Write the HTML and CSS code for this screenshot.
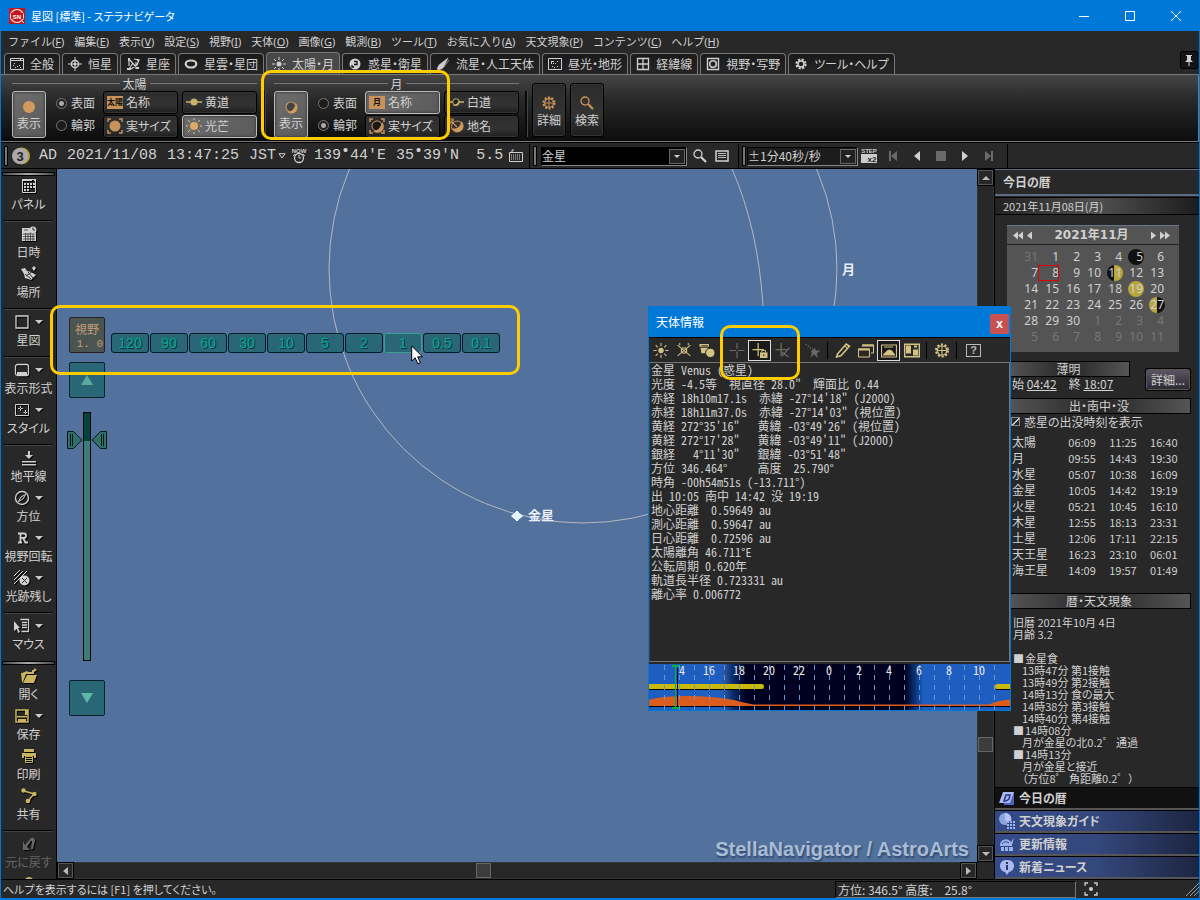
FILE: index.html
```html
<!DOCTYPE html>
<html lang="ja">
<head>
<meta charset="utf-8">
<title>星図 [標準] - ステラナビゲータ</title>
<link rel="stylesheet" href="styles.css">
</head>
<body>
<svg class="defs" aria-hidden="true">
  <defs>
    <symbol id="i-all" viewBox="0 0 14 14"><path d="M.5 1.500h13v11H.5zM1 3.500h12" fill="none" stroke="currentColor"/><path d="M10 2h1v1h-1zM3 8h1v1H3zM5 10h1v1H5zM7 9h1v1H7zM9 8h1v1H9zM10 10h1v1h-1zM4 6h1v1H4z" fill="currentColor"/></symbol>
    <symbol id="i-star" viewBox="0 0 14 14"><path d="M7 0v14M0 7h14" stroke="currentColor"/><circle cx="7" cy="7" r="3.600" fill="none" stroke="currentColor" stroke-width="1.500"/><circle cx="7" cy="7" r="1.500" fill="currentColor"/></symbol>
    <symbol id="i-const" viewBox="0 0 14 14"><path d="M3 1v8M3 2l8 9M8 2l5 1-2 5-6 4M3 12l4-6M10 5v7" fill="none" stroke="currentColor" stroke-width="1.200"/><path d="M2 1h2v3H2zM11 2h2v2h-2zM1 11h4v2H1zM10 10h3v2h-3z" fill="currentColor"/></symbol>
    <symbol id="i-neb" viewBox="0 0 14 14"><ellipse cx="7" cy="7" rx="5.300" ry="3.500" fill="none" stroke="currentColor" stroke-width="2.200"/></symbol>
    <symbol id="i-sun" viewBox="0 0 14 14"><circle cx="7" cy="7" r="2.500" fill="currentColor"/><path d="M7 0v3M7 11v3M0 7h3M11 7h3M2 2l2 2M10 10l2 2M12 2l-2 2M4 10l-2 2" stroke="currentColor"/></symbol>
    <symbol id="i-planet" viewBox="0 0 14 14"><circle cx="7" cy="7" r="5.500" fill="currentColor"/><path d="M6 4.500h3v3H6M4 8v2h2" fill="none" stroke="#111" stroke-width="1.300"/></symbol>
    <symbol id="i-comet" viewBox="0 0 14 14"><path d="M12 1L3 8l-2 4 2 1 4-2zM13 3L8 10" fill="currentColor" stroke="currentColor" stroke-width=".600"/></symbol>
    <symbol id="i-land" viewBox="0 0 14 14"><path d="M.5 1.500h13v11H.5z" fill="none" stroke="currentColor"/><path d="M3 4h3v1H4v2H3zM7 6h1v1H7zM9 4h1v1H9zM4 9h1v1H4zM9 9h1v1H9zM6 10h1v1H6zM5 6h1v1H5z" fill="currentColor"/></symbol>
    <symbol id="i-grid" viewBox="0 0 14 14"><path d="M1.500 1.500h11v11h-11zM7 1.500v11M1.500 7h11" fill="none" stroke="currentColor" stroke-width="1.300"/></symbol>
    <symbol id="i-field" viewBox="0 0 14 14"><path d="M1.500 1.500h11v11h-11z" fill="none" stroke="currentColor" stroke-width="1.400"/><circle cx="7" cy="7" r="3.300" fill="none" stroke="currentColor" stroke-width="1.600"/></symbol>
    <symbol id="i-cog" viewBox="0 0 14 14"><circle cx="7" cy="7" r="4.500" fill="none" stroke="currentColor" stroke-width="2.200" stroke-dasharray="2.200 1.334"/><circle cx="7" cy="7" r="3" fill="none" stroke="currentColor" stroke-width="1.500"/></symbol>
    <symbol id="i-gear" viewBox="0 0 14 14"><circle cx="7" cy="7" r="5.600" fill="none" stroke="currentColor" stroke-width="2" stroke-dasharray="2 1.519"/><circle cx="7" cy="7" r="4.400" fill="none" stroke="currentColor" stroke-width="1.200"/><path d="M7 3v8M3 7h8" stroke="currentColor"/></symbol>
    <symbol id="i-halfsun" viewBox="0 0 14 14"><circle cx="7" cy="7" r="5" fill="#444" stroke="#c8935a" stroke-width="1.200"/><path d="M11.500 3A6 6 0 0 1 3.500 12c4 0 8-4 8-9z" fill="#d29a5e"/></symbol>
    <symbol id="i-size" viewBox="0 0 16 16"><circle cx="8" cy="8" r="5.500" fill="currentColor"/><path d="M1 4V1h3M12 1h3v3M15 12v3h-3M4 15H1v-3" fill="none" stroke="currentColor" stroke-width="1.500"/></symbol>
    <symbol id="i-sizehalf" viewBox="0 0 16 16"><circle cx="8" cy="8" r="5" fill="#181818" stroke="currentColor"/><path d="M13 4a6 6 0 0 1-9 9c5 0 8-4 9-9z" fill="currentColor"/><path d="M1 4V1h3M12 1h3v3M15 12v3h-3M4 15H1v-3" fill="none" stroke="currentColor" stroke-width="1.500"/></symbol>
    <symbol id="i-ecl" viewBox="0 0 16 16"><path d="M0 8h16" stroke="#c9b26a" stroke-width="1.500"/><circle cx="8" cy="8" r="3.500" fill="#c9b26a"/></symbol>
    <symbol id="i-lun" viewBox="0 0 16 16"><path d="M0 8h5M11 8h5" stroke="#c9b26a" stroke-width="1.500"/><circle cx="8" cy="8" r="3.300" fill="#222" stroke="#c9b26a"/><path d="M11 6a4 4 0 0 1-6 5c3 0 5-2 6-5z" fill="#c9b26a"/></symbol>
    <symbol id="i-place" viewBox="0 0 16 16"><path d="M13 3a6 6 0 1 1-9 7c4 2 9-1 9-7z" fill="#d29a5e"/><path d="M1 1h4v2H3v2H1zM4 4l5 5" fill="none" stroke="#c8935a" stroke-width="1.200"/><circle cx="9" cy="8.500" r="5.500" fill="none" stroke="#c8935a"/></symbol>
    <symbol id="i-rays" viewBox="0 0 16 16"><circle cx="8" cy="8" r="4" fill="#e0a868"/><path d="M8 0v2M8 14v2M0 8h2M14 8h2M2 2l2 2M12 12l2 2M14 2l-2 2M4 12l-2 2" stroke="#e0c080"/></symbol>
    <symbol id="i-search" viewBox="0 0 14 14"><circle cx="5" cy="5" r="4" fill="none" stroke="currentColor" stroke-width="1.300"/><path d="M8 8l5 5" stroke="currentColor" stroke-width="2.200"/></symbol>
    <symbol id="i-pin" viewBox="0 0 10 12"><path d="M2 1h6v1H7v4l2 2H1l2-2V2H2z" fill="currentColor"/><path d="M5 8v4" stroke="currentColor"/></symbol>
    <symbol id="i-down" viewBox="0 0 8 4"><path d="M0 0h8L4 4z" fill="currentColor"/></symbol>
    <symbol id="i-left" viewBox="0 0 5 8"><path d="M5 0v8L0 4z" fill="currentColor"/></symbol>
    <symbol id="i-right" viewBox="0 0 5 8"><path d="M0 0v8l5-4z" fill="currentColor"/></symbol>
    <symbol id="i-panel" viewBox="0 0 16 16"><path d="M1.500 1.500h13v13h-13z" fill="none" stroke="currentColor"/><path d="M1 1h10v2H1zM13 1h2v2h-2zM3 5h2v2H3zM6 5h2v2H6zM9 5h2v2H9zM12 5h2v2h-2zM3 8h2v2H3zM6 8h2v2H6zM9 8h2v2H9zM12 8h2v2h-2zM3 11h2v2H3zM6 11h2v2H6z" fill="currentColor"/></symbol>
    <symbol id="i-date" viewBox="0 0 16 16"><path d="M1 2h8v5h6v8H1z" fill="currentColor"/><path d="M3 4h4M2 8h12M2 10.500h12M2 13h12M4.500 7v8M7 7v8M9.500 7v8M12 7v8" stroke="#282828" stroke-width=".700"/><circle cx="12" cy="4" r="3.500" fill="currentColor"/><path d="M12 1.500V4h2" fill="none" stroke="#282828"/></symbol>
    <symbol id="i-site" viewBox="0 0 16 16"><path d="M0 3l4-1 2 3 4 1 5 3-5 5-6-2-1-4zM13 0l2 2-2 3-2-3z" fill="currentColor"/><path d="M12 5L5 10M7 6l5 6M4 8l6 5" stroke="#282828"/></symbol>
    <symbol id="i-square" viewBox="0 0 16 16"><path d="M2 2h12v12H2z" fill="none" stroke="currentColor" stroke-width="1.300"/></symbol>
    <symbol id="i-form" viewBox="0 0 16 16"><rect x="1.500" y="2.500" width="13" height="11" rx="2" fill="none" stroke="currentColor" stroke-width="1.300"/><path d="M3 10h10v3H3z" fill="currentColor"/></symbol>
    <symbol id="i-style" viewBox="0 0 16 16"><path d="M1.500 2.500h13v11h-13z" fill="none" stroke="currentColor"/><path d="M6.500 4v2M6.500 7v2M4 6.500h2M7 6.500h2M11.500 8v2M11.500 11v1M9.500 10.500h2M12 10.500h1" stroke="currentColor"/></symbol>
    <symbol id="i-horizon" viewBox="0 0 16 16"><path d="M7 1h2v4h3L8 9 4 5h3zM1 11h14v1.500H1zM1 14h14v1.500H1z" fill="currentColor"/></symbol>
    <symbol id="i-compass" viewBox="0 0 16 16"><circle cx="8" cy="8" r="6.500" fill="none" stroke="currentColor" stroke-width="1.400"/><path d="M11.500 4.500L9 9l-4.500 2.500L7 7z" fill="none" stroke="currentColor"/></symbol>
    <symbol id="i-r" viewBox="0 0 16 16"><path d="M4 3.500h6q2 0 2 2.200t-2 2.200H6M6.500 3.500v9M4 12.500h4M9 8l2.500 4.500H14" fill="none" stroke="currentColor" stroke-width="1.800"/></symbol>
    <symbol id="i-trail" viewBox="0 0 16 16"><path d="M0 6l6-6M0 10L9 1M0 14L13 1" stroke="currentColor"/><circle cx="10.500" cy="10.500" r="5" fill="currentColor"/><path d="M8 8l5 5M13 8l-5 5" stroke="#282828"/></symbol>
    <symbol id="i-mouse" viewBox="0 0 16 16"><path d="M0 3l6 7H4l2 4-2 1-1-4-3 2z" fill="currentColor"/><path d="M6.500 1.500h8v12h-7M8 4.500h5M8 7h5M8 9.500h5" fill="none" stroke="currentColor" stroke-width="1.300"/></symbol>
    <symbol id="i-open" viewBox="0 0 16 16"><path d="M0 5h1l5-2 1 1h4V2h2V0l3 2-3 2v2H5l-3 8H1zM6 7h10l-3 8H2z" fill="currentColor"/></symbol>
    <symbol id="i-save" viewBox="0 0 16 16"><path d="M2 2h12v12H2z" fill="none" stroke="currentColor" stroke-width="1.500"/><path d="M3 8h10v1.500H3zM4 11h8v3H4zM11 2h3v5h-3z" fill="currentColor"/></symbol>
    <symbol id="i-print" viewBox="0 0 16 16"><path d="M3 1h10v3H3zM1 5h14v5h-2V8H3v2H1z" fill="currentColor"/><path d="M4.500 8.500h7v6h-7zM5 10.500h6M5 12.500h6" fill="none" stroke="currentColor"/></symbol>
    <symbol id="i-share" viewBox="0 0 16 16"><path d="M3 3l10 3-6 7" fill="none" stroke="currentColor" stroke-width="1.500"/><circle cx="2.500" cy="2.500" r="2.200" fill="currentColor"/><circle cx="13.500" cy="6" r="2.200" fill="currentColor"/><circle cx="7" cy="13" r="2.300" fill="currentColor"/></symbol>
    <symbol id="i-undo" viewBox="0 0 16 16"><path d="M2 5v9h7L6 11l4-6q1-1 1 1l-1 7h2l2-8q0-4-4-3L4 9z" fill="currentColor"/></symbol>
    <symbol id="i-bulb" viewBox="0 0 16 16"><path d="M3 4q5-6 10 0v8H3z" fill="currentColor"/></symbol>
    <symbol id="i-key" viewBox="0 0 14 14"><path d="M.5 3.500h13v9H.5zM3 3V1h2" fill="none" stroke="currentColor"/><path d="M2 6h10M2 8h10M2 10h10" stroke="currentColor" stroke-dasharray="1 1"/></symbol>
    <symbol id="i-list" viewBox="0 0 14 14"><path d="M1 2h12v10H1z" fill="none" stroke="currentColor" stroke-width="1.500"/><path d="M3 4.500h8M3 6.500h8M3 8.500h8" stroke="currentColor" stroke-width=".900"/></symbol>
    <symbol id="i-db" viewBox="0 0 16 16"><path d="M0 1h10v3H0zM1 5h8l1 6H2z" fill="currentColor"/><circle cx="11.500" cy="10.500" r="5" fill="currentColor" stroke="#282828"/><path d="M2 3h7" stroke="#282828"/></symbol>
    <symbol id="i-sunx" viewBox="0 0 14 14"><circle cx="7" cy="7" r="2.500" fill="none" stroke="currentColor"/><path d="M1 2l12 10M13 2L1 12M3 0v2M11 0v2" stroke="currentColor"/></symbol>
    <symbol id="i-plus" viewBox="0 0 16 16"><path d="M8 0v6M8 9v7M0 8h7M9 8h7" stroke="currentColor" stroke-width="1.300"/></symbol>
    <symbol id="i-lock" viewBox="0 0 16 16"><path d="M6 0v14M0 7h12" stroke="currentColor" stroke-width="1.300"/><path d="M8 10h8v6H8z" fill="currentColor"/><path d="M10 10V8h4v2" fill="none" stroke="currentColor"/><path d="M12 12v2" stroke="#222"/></symbol>
    <symbol id="i-edit" viewBox="0 0 16 16"><path d="M6 0v14M0 7h12M15 5l-8 9M7 10l7 5" stroke="currentColor" stroke-width="1.400"/></symbol>
    <symbol id="i-scope" viewBox="0 0 16 16"><path d="M0 1l8 6" stroke="currentColor" stroke-width="1.500" stroke-dasharray="1.500 1.500"/><path d="M6 9l4-4 1 3h5l-4 3 1 5-4-4-4 4 2-5z" fill="currentColor"/></symbol>
    <symbol id="i-pencil" viewBox="0 0 14 14"><path d="M2 10l8-9 3 2-8 9-4 1z" fill="none" stroke="currentColor" stroke-width="1.500"/><path d="M9 3l2 2" stroke="currentColor"/></symbol>
    <symbol id="i-wins" viewBox="0 0 16 14"><path d="M4.500 3V1.500h11v8H13M.5 5.500h11v8H.5z" fill="none" stroke="currentColor"/><path d="M4 1h12v2H4zM0 5h12v2H0z" fill="currentColor"/></symbol>
    <symbol id="i-pic" viewBox="0 0 16 14"><path d="M.5 1.500h15v12H.5z" fill="none" stroke="currentColor" stroke-width="1.200"/><path d="M2 11l4-4 2-1 3 1 3 4v1H2zM3 3h9v1H3z" fill="currentColor"/></symbol>
    <symbol id="i-book" viewBox="0 0 16 14"><path d="M.7.700h14.600v12.600H.7z" fill="none" stroke="currentColor" stroke-width="1.400"/><path d="M2 2h5v8H2zM9 6h5v6H9zM10 2h3v2h-3z" fill="currentColor"/></symbol>
    <symbol id="i-focus" viewBox="0 0 14 14"><path d="M1 4V1h3M10 1h3v3M13 10v3h-3M4 13H1v-3" fill="none" stroke="currentColor" stroke-width="1.300"/><circle cx="7" cy="7" r="2" fill="currentColor"/></symbol>
  </defs>
</svg>
<div class="window">
  <header class="titlebar">
    <svg class="logo" viewBox="0 0 16 16"><rect width="16" height="16" fill="#c81418"/><circle cx="8" cy="8" r="6.500" fill="none" stroke="#fff" stroke-width="1.200"/><rect x="2" y="5" width="12" height="6" fill="#c81418"/><text x="8" y="10.500" text-anchor="middle" class="logo-text">SN</text><path d="M12 12l3 3" stroke="#fff"/></svg>
    <h1>星図 [標準] - ステラナビゲータ</h1>
    <div class="wincontrols">
      <button aria-label="最小化"><svg width="10" height="10"><path d="M0 5.500h10" stroke="#fff"/></svg></button>
      <button aria-label="最大化"><svg width="10" height="10"><path d="M.5.500h9v9h-9z" fill="none" stroke="#fff"/></svg></button>
      <button aria-label="閉じる"><svg width="10" height="10"><path d="M0 0l10 10M10 0L0 10" stroke="#fff"/></svg></button>
    </div>
  </header>
  <nav class="menubar">
    <a href="#">ファイル(<u>F</u>)</a><a href="#">編集(<u>E</u>)</a><a href="#">表示(<u>V</u>)</a><a href="#">設定(<u>S</u>)</a><a href="#">視野(<u>I</u>)</a><a href="#">天体(<u>O</u>)</a><a href="#">画像(<u>G</u>)</a><a href="#">観測(<u>B</u>)</a><a href="#">ツール(<u>T</u>)</a><a href="#">お気に入り(<u>A</u>)</a><a href="#">天文現象(<u>P</u>)</a><a href="#">コンテンツ(<u>C</u>)</a><a href="#">ヘルプ(<u>H</u>)</a>
  </nav>
  <div class="tabs">
    <button><svg><use href="#i-all"/></svg>全般</button>
    <button><svg><use href="#i-star"/></svg>恒星</button>
    <button><svg><use href="#i-const"/></svg>星座</button>
    <button><svg><use href="#i-neb"/></svg>星雲・星団</button>
    <button class="active"><svg><use href="#i-sun"/></svg>太陽・月</button>
    <button><svg><use href="#i-planet"/></svg>惑星・衛星</button>
    <button><svg><use href="#i-comet"/></svg>流星・人工天体</button>
    <button><svg><use href="#i-land"/></svg>昼光・地形</button>
    <button><svg><use href="#i-grid"/></svg>経緯線</button>
    <button><svg><use href="#i-field"/></svg>視野・写野</button>
    <button><svg><use href="#i-cog"/></svg>ツール・ヘルプ</button>
    <button class="pin" aria-label="固定"><svg><use href="#i-pin"/></svg></button>
  </div>
  <section class="ribbon">
    <fieldset class="group">
      <legend>太陽</legend>
      <button class="big on"><svg viewBox="0 0 14 14"><circle cx="7" cy="7" r="6" fill="#d29a5e"/></svg>表示</button>
      <div class="radios">
        <label><input type="radio" name="sun" checked>表面</label>
        <label><input type="radio" name="sun">輪郭</label>
      </div>
      <div class="cmds">
        <button><span class="tag">太陽</span>名称</button>
        <button><svg><use href="#i-ecl"/></svg>黄道</button>
        <button><svg class="gold"><use href="#i-size"/></svg>実サイズ</button>
        <button class="on"><svg><use href="#i-rays"/></svg>光芒</button>
      </div>
    </fieldset>
    <fieldset class="group">
      <legend>月</legend>
      <button class="big on"><svg><use href="#i-halfsun"/></svg>表示</button>
      <div class="radios">
        <label><input type="radio" name="moon">表面</label>
        <label><input type="radio" name="moon" checked>輪郭</label>
      </div>
      <div class="cmds">
        <button class="on"><span class="tag">月</span>名称</button>
        <button><svg><use href="#i-lun"/></svg>白道</button>
        <button><svg class="gold"><use href="#i-sizehalf"/></svg>実サイズ</button>
        <button><svg><use href="#i-place"/></svg>地名</button>
      </div>
    </fieldset>
    <div class="actions">
      <button class="big"><svg class="gold"><use href="#i-gear"/></svg>詳細</button>
      <button class="big"><svg class="gold"><use href="#i-search"/></svg>検索</button>
    </div>
  </section>
  <div class="toolbar">
    <div class="band clock">
      <i class="grip"></i>
      <svg class="badge" viewBox="0 0 18 18"><circle cx="9.500" cy="9" r="8.500" fill="#b9a23c"/><circle cx="8" cy="9" r="8" fill="#aaa"/><text x="8" y="13.500" text-anchor="middle" class="badge-text">3</text></svg>
      <span>AD</span><span>2021/11/08</span><span>13:47:25</span><span>JST</span>
      <svg class="tri" viewBox="0 0 8 6"><path d="M1 .7h6L4 5z" fill="none" stroke="#d0d0d0"/></svg>
      <svg class="now" viewBox="0 0 16 16"><text x="8" y="5" text-anchor="middle" class="tiny">NOW</text><circle cx="8" cy="10" r="4.500" fill="none" stroke="#ccc" stroke-width="1.300"/><path d="M8 7v3h2M4 6L2 8M12 6l2 2" fill="none" stroke="#ccc"/></svg>
      <span class="c-lon">139<sup>•</sup>44'E</span><span class="c-lat">35<sup>•</sup>39'N</span><span>5.5</span>
      <svg class="key"><use href="#i-key"/></svg>
    </div>
    <div class="band">
      <i class="grip"></i>
      <div class="combo target"><select aria-label="天体"><option>金星</option></select><svg><use href="#i-down"/></svg></div>
      <button aria-label="検索"><svg><use href="#i-search"/></svg></button>
      <button aria-label="一覧"><svg><use href="#i-list"/></svg></button>
    </div>
    <div class="band play">
      <i class="grip"></i>
      <div class="combo rate"><select aria-label="速度"><option>±1分40秒/秒</option></select><svg><use href="#i-down"/></svg></div>
      <button aria-label="ステップ"><svg class="step" viewBox="0 0 16 16"><text x="8" y="5" text-anchor="middle" class="tiny">STEP</text><path d="M0 6h16v9H0z" fill="#ccc"/><text x="11" y="14" text-anchor="middle" class="tiny dark">x2</text></svg></button>
      <button class="dim" aria-label="先頭"><svg viewBox="0 0 12 12"><path d="M2 1h2v10H2zM10 1v10L4 6z" fill="currentColor"/></svg></button>
      <button aria-label="逆再生"><svg viewBox="0 0 12 12"><path d="M9 1v10L3 6z" fill="currentColor"/></svg></button>
      <button class="dim" aria-label="停止"><svg viewBox="0 0 12 12"><path d="M1 1h10v10H1z" fill="currentColor"/></svg></button>
      <button aria-label="再生"><svg viewBox="0 0 12 12"><path d="M3 1v10l6-5z" fill="currentColor"/></svg></button>
      <button class="dim" aria-label="末尾"><svg viewBox="0 0 12 12"><path d="M8 1h2v10H8zM2 1v10l6-5z" fill="currentColor"/></svg></button>
    </div>
  </div>
  <main class="workspace">
    <aside class="tools">
      <i class="hgrip top"></i>
      <button><span><svg><use href="#i-panel"/></svg></span>パネル</button>
      <hr>
      <button><span><svg><use href="#i-date"/></svg></span>日時</button>
      <button><span><svg><use href="#i-site"/></svg></span>場所</button>
      <hr>
      <button class="drop"><span><svg><use href="#i-square"/></svg></span>星図</button>
      <hr>
      <button class="drop"><span><svg><use href="#i-form"/></svg></span>表示形式</button>
      <button class="drop"><span><svg><use href="#i-style"/></svg></span>スタイル</button>
      <hr>
      <button><span><svg><use href="#i-horizon"/></svg></span>地平線</button>
      <button class="drop"><span><svg><use href="#i-compass"/></svg></span>方位</button>
      <button class="drop"><span><svg><use href="#i-r"/></svg></span>視野回転</button>
      <button class="drop"><span><svg><use href="#i-trail"/></svg></span>光跡残し</button>
      <hr>
      <button class="drop"><span><svg><use href="#i-mouse"/></svg></span>マウス</button>
      <i class="hgrip"></i>
      <button class="file"><span><svg><use href="#i-open"/></svg></span>開く</button>
      <button class="file drop"><span><svg><use href="#i-save"/></svg></span>保存</button>
      <button class="file"><span><svg><use href="#i-print"/></svg></span>印刷</button>
      <button class="file"><span><svg><use href="#i-share"/></svg></span>共有</button>
      <hr>
      <button class="off" disabled><span><svg><use href="#i-undo"/></svg></span>元に戻す</button>
      <button class="file" aria-label="ヒント"><span><svg><use href="#i-bulb"/></svg></span></button>
    </aside>
    <section class="chart">
      <div class="sky">
        <svg class="orbits" width="920" height="693" viewBox="57 169 920 693">
          <circle cx="583" cy="269" r="254"/>
          <path d="M732 169Q758 228 763 306"/>
          <path d="M517 511l2.500 2.500 3 2.500-3 2.500-2.500 2.500-2.500-2.500-3-2.500 3-2.500z" class="venus"/>
        </svg>
        <span class="mark moon">月</span>
        <span class="mark venusname">金星</span>
        <div class="zoom">
          <button class="fov">視野<b>1. 0</b></button>
          <button class="arrow" aria-label="広げる"><svg viewBox="0 0 14 12"><path d="M7 1l6 10H1z" fill="#5aa89c"/></svg></button>
          <input type="range" min="0" max="100" value="8" aria-label="視野">
          <button class="arrow" aria-label="狭める"><svg viewBox="0 0 14 12"><path d="M1 1h12L7 11z" fill="#5fb5a6"/></svg></button>
        </div>
        <div class="fovs"><button>120</button><button>90</button><button>60</button><button>30</button><button>10</button><button>5</button><button>2</button><button class="hot">1</button><button>0.5</button><button>0.1</button></div>
        <svg class="cursor" viewBox="0 0 12 20"><path d="M.7 1v15l3.500-3.200 2.600 6 2.500-1.100-2.600-5.900H11.500z" fill="#fff" stroke="#000"/></svg>
        <strong class="brand">StellaNavigator / AstroArts</strong>
      </div>
      <div class="vscroll"><button aria-label="上"><svg class="v"><use href="#i-down"/></svg></button><i></i><button aria-label="下"><svg><use href="#i-down"/></svg></button></div>
      <div class="hscroll"><button aria-label="左"><svg><use href="#i-left"/></svg></button><i></i><button aria-label="右"><svg><use href="#i-right"/></svg></button></div>
    </section>
    <aside class="side">
      <h2>今日の暦</h2>
      <div class="today">2021年11月08日(月)</div>
      <div class="almanac">
        <div class="cal">
          <div class="calhead"><button aria-label="前年"><svg><use href="#i-left"/></svg><svg><use href="#i-left"/></svg></button><button aria-label="前月"><svg><use href="#i-left"/></svg></button><strong>2021年11月</strong><button aria-label="翌月"><svg><use href="#i-right"/></svg></button><button aria-label="翌年"><svg><use href="#i-right"/></svg><svg><use href="#i-right"/></svg></button></div>
          <table>
            <tr><td class="out">31</td><td>1</td><td>2</td><td>3</td><td>4</td><td><span class="new">5</span></td><td>6</td></tr>
            <tr><td>7</td><td class="sel">8</td><td>9</td><td>10</td><td><span class="first">11</span></td><td>12</td><td>13</td></tr>
            <tr><td>14</td><td>15</td><td>16</td><td>17</td><td>18</td><td><span class="full">19</span></td><td>20</td></tr>
            <tr><td>21</td><td>22</td><td>23</td><td>24</td><td>25</td><td>26</td><td><span class="last">27</span></td></tr>
            <tr><td>28</td><td>29</td><td>30</td><td class="out">1</td><td class="out">2</td><td class="out">3</td><td class="out">4</td></tr>
            <tr class="out"><td>5</td><td>6</td><td>7</td><td>8</td><td>9</td><td>10</td><td>11</td></tr>
          </table>
        </div>
        <div class="twilight">
          <div><h3>薄明</h3><p>始 <u>04:42</u>　終 <u>18:07</u></p></div>
          <button>詳細...</button>
        </div>
        <h3>出・南中・没</h3>
        <label class="check"><input type="checkbox" checked>惑星の出没時刻を表示</label>
        <table class="rise">
          <tr><th>太陽</th><td>06:09</td><td>11:25</td><td>16:40</td></tr>
          <tr><th>月</th><td>09:55</td><td>14:43</td><td>19:30</td></tr>
          <tr><th>水星</th><td>05:07</td><td>10:38</td><td>16:09</td></tr>
          <tr><th>金星</th><td>10:05</td><td>14:42</td><td>19:19</td></tr>
          <tr><th>火星</th><td>05:21</td><td>10:45</td><td>16:10</td></tr>
          <tr><th>木星</th><td>12:55</td><td>18:13</td><td>23:31</td></tr>
          <tr><th>土星</th><td>12:06</td><td>17:11</td><td>22:15</td></tr>
          <tr><th>天王星</th><td>16:23</td><td>23:10</td><td>06:01</td></tr>
          <tr><th>海王星</th><td>14:09</td><td>19:57</td><td>01:49</td></tr>
        </table>
        <h3>暦・天文現象</h3>
        <div class="events">
          <p>旧暦 2021年10月 4日</p><p>月齢 3.2</p>
          <h4>金星食</h4>
          <ul><li>13時47分 第1接触</li><li>13時49分 第2接触</li><li>14時13分 食の最大</li><li>14時38分 第3接触</li><li>14時40分 第4接触</li></ul>
          <h4>14時08分</h4>
          <ul><li>月が金星の北0.2゜ 通過</li></ul>
          <h4>14時13分</h4>
          <ul><li>月が金星と接近</li><li>（方位8゜ 角距離0.2゜）</li></ul>
        </div>
      </div>
      <nav class="links">
        <a href="#" class="current"><svg viewBox="0 0 16 16"><path d="M5 3h10v12H5z" fill="#4a62b8"/><path d="M4 2h11l-4 11H0z" fill="#a9b9ee"/><path d="M7 5h4l-1 4-3 2H5z" fill="none" stroke="#26348a" stroke-width="1.500"/></svg>今日の暦</a>
        <a href="#"><svg viewBox="0 0 16 16"><circle cx="6" cy="6" r="6" fill="#8da5df"/><path d="M6 0v8h6a6 6 0 0 0-6-8z" fill="#b5c5f2"/><path d="M8 8h8v8H8z" fill="#9db1ea"/><path d="M8 10.500h8M8 13.500h8M10.500 8v8M13.500 8v8" stroke="#34498c"/></svg>天文現象ガイド</a>
        <a href="#"><svg viewBox="0 0 16 16"><path d="M1 9a6 6 0 0 1 11-3l3-4-2 7v1H1zM2 11h3v4H2zM6 11h3v4H6zM10 11h4v4h-4z" fill="#9db1ea"/><path d="M3 8q3-4 7-1" fill="none" stroke="#34498c"/></svg>更新情報</a>
        <a href="#"><svg viewBox="0 0 16 16"><path d="M8 1a6 6 0 0 1 2 12l-2 3-2-3A6 6 0 0 1 8 1z" fill="#a9b9ee"/><path d="M7 3h2v2H7zM7 6h2v5H7z" fill="#26386e"/></svg>新着ニュース</a>
      </nav>
    </aside>
  </main>
  <footer class="status"><span>ヘルプを表示するには [F1] を押してください。</span><output>方位: 346.5° 高度:　25.8°</output><svg class="focus"><use href="#i-focus"/></svg><svg class="sizer" viewBox="0 0 14 14"><path d="M1 14L14 1M5 14l9-9M9 14l5-5" stroke="#999"/></svg></footer>

  <section class="dialog" aria-label="天体情報">
    <header><h2>天体情報</h2><button aria-label="閉じる">x</button></header>
    <div class="dtools">
      <button aria-label="太陽"><svg><use href="#i-sun"/></svg></button><button aria-label="太陽を消す"><svg><use href="#i-sunx"/></svg></button><button aria-label="データ"><svg><use href="#i-db"/></svg></button><i></i>
      <button class="dim" aria-label="中央"><svg><use href="#i-plus"/></svg></button><button class="set" aria-label="固定"><svg><use href="#i-lock"/></svg></button><button class="dim" aria-label="編集"><svg><use href="#i-edit"/></svg></button><i></i>
      <button class="dim" aria-label="望遠鏡"><svg><use href="#i-scope"/></svg></button><i></i>
      <button aria-label="メモ"><svg><use href="#i-pencil"/></svg></button><button aria-label="ウィンドウ"><svg><use href="#i-wins"/></svg></button><button class="set" aria-label="高度グラフ"><svg><use href="#i-pic"/></svg></button><button aria-label="資料"><svg><use href="#i-book"/></svg></button><i></i>
      <button aria-label="設定"><svg><use href="#i-gear"/></svg></button><i></i><button class="help">?</button>
    </div>
    <pre>金星 Venus (惑星)
光度 -4.5等  視直径 28.0"  輝面比 0.44
赤経 18h10m17.1s  赤緯 -27°14'18" (J2000)
赤経 18h11m37.0s  赤緯 -27°14'03" (視位置)
黄経 272°35'16"   黄緯 -03°49'26" (視位置)
黄経 272°17'28"   黄緯 -03°49'11" (J2000)
銀経   4°11'30"   銀緯 -03°51'48"
方位 346.464°     高度  25.790°
時角 -00h54m51s (-13.711°)
出 10:05 南中 14:42 没 19:19
地心距離  0.59649 au
測心距離  0.59647 au
日心距離  0.72596 au
太陽離角 46.711°E
公転周期 0.620年
軌道長半径 0.723331 au
離心率 0.006772</pre>
    <svg class="timeline" viewBox="0 0 361 46">
      <defs><linearGradient id="night"><stop offset="0" stop-color="#1e5ec0"/><stop offset=".2" stop-color="#1e5ec0"/><stop offset=".21" stop-color="#2b559c"/><stop offset=".23" stop-color="#0a3070"/><stop offset=".27" stop-color="#000020"/><stop offset=".71" stop-color="#000020"/><stop offset=".74" stop-color="#0a3a80"/><stop offset=".76" stop-color="#1e5ec0"/><stop offset="1" stop-color="#1e5ec0"/></linearGradient></defs>
      <rect width="361" height="46" fill="url(#night)"/>
      <path d="M0 42.500h361M0 25.500h114M347 25.500h14" stroke="#000"/>
      <path d="M0 36q12-4 40-4 22 0 45 4 12 3 20 4.500h235q8-4 21-5V42H0z" fill="#dc5c1e"/>
      <path d="M0 20h113q2 0 2 2.500t-2 2.500H0zM361 20h-13q-2 0-2 2.500t2 2.500h13z" fill="#c8b90a"/>
      <path class="hours" d="M15.500 1v45M30.500 1v45M45.500 1v45M60.500 1v45M75.500 1v45M90.500 1v45M105.500 1v45M120.500 1v45M135.500 1v45M150.500 1v45M165.500 1v45M180.500 1v45M195.500 1v45M210.500 1v45M225.500 1v45M240.500 1v45M255.500 1v45M270.500 1v45M285.500 1v45M300.500 1v45M315.500 1v45M330.500 1v45M345.500 1v45"/>
      <g class="hourtext"><text x="33" y="11">4</text><text x="60" y="11">16</text><text x="90" y="11">18</text><text x="120" y="11">20</text><text x="150" y="11">22</text><text x="180" y="11">0</text><text x="210" y="11">2</text><text x="240" y="11">4</text><text x="270" y="11">6</text><text x="300" y="11">8</text><text x="330" y="11">10</text></g>
      <path d="M28.500 4v39" stroke="#001020"/><path d="M23 1h7v2h-3v40h3v2h-7v-2h3V3h-3z" fill="#00b43c"/>
    </svg>
  </section>
  <i class="callout c1"></i><i class="callout c2"></i><i class="callout c3"></i>
</div>
</body>
</html>
```

FILE: styles.css
```css
* { box-sizing: border-box; }
:root { --text: #d0d0d0; --khaki: #d2c284; --panel: #282828; }
body { margin: 0; background: #0078d7; color: var(--text); font: 12px/16px "Noto Sans CJK JP", sans-serif; font-feature-settings: "palt"; }
button, select, input { font: inherit; color: inherit; font-feature-settings: inherit; margin: 0; }
button { padding: 0; border: 0; background: none; display: inline-flex; align-items: center; justify-content: center; white-space: nowrap; }
h1, h2, h3, h4, p, ul { margin: 0; padding: 0; font-weight: 400; font-size: inherit; }
ul { list-style: none; }
a { color: inherit; text-decoration: none; }
svg { display: block; flex: none; width: 14px; height: 14px; }
svg.defs { position: absolute; width: 0; height: 0; }
.window { position: relative; display: flex; flex-direction: column; height: 100vh; padding: 0 1px 2px 1px; overflow: hidden; }

.titlebar { display: flex; align-items: center; height: 31px; flex: none; padding-left: 8px; background: #0078d7; color: #fff; }
.titlebar .logo { width: 16px; height: 16px; }
.logo-text { font: bold 6px "Liberation Sans", sans-serif; fill: #fff; }
.titlebar h1 { margin-left: 6px; flex: 1; font-size: 11px; }
.wincontrols { display: flex; height: 100%; }
.wincontrols button { width: 46px; }
.wincontrols svg { width: 10px; height: 10px; }

.menubar { display: flex; gap: 10px; align-items: center; height: 21px; flex: none; padding-left: 7px; background: var(--panel); font: 11px/16px "Noto Sans", "Noto Sans CJK JP", sans-serif; }
.menubar a { white-space: nowrap; }
.tabs { display: flex; gap: 2px; align-items: flex-end; height: 22px; flex: none; padding: 0 1px 0 3px; background: var(--panel); }
.tabs button { height: 21px; gap: 6px; padding: 0 5px; border: 1px solid #777; border-bottom: 0; border-radius: 4px 4px 0 0; background: linear-gradient(#1a1a1a, #262626); }
.tabs .active { height: 22px; background: #484848; }
.tabs .pin { margin-left: auto; padding: 0; width: 18px; height: 18px; margin-bottom: 5px; border: 1px solid #000; border-radius: 2px; background: #151515; }
.pin svg { width: 10px; height: 12px; }

.ribbon { display: flex; height: 68px; flex: none; padding: 0 11px; border: 1px solid #777; border-left: 0; background: linear-gradient(#454545, #2a2a2a 35%, #0c0c0c); }
.group { display: flex; align-items: center; margin: 0 17px 0 0; padding: 15px 0 3px; border: 0; position: relative; min-width: 0; }
.group + .group { margin-right: 13px; }
.group legend { position: absolute; left: 0; right: 0; top: 1px; display: flex; align-items: center; gap: 3px; padding: 0; line-height: 15px; }
.group legend::before, .group legend::after { content: ""; flex: 1; height: 1px; background: #777; }
.group::after { content: ""; position: absolute; right: -9px; top: 16px; bottom: 4px; width: 2px; background: #0a0a0a; border-right: 1px solid #444; }
.ribbon button { border: 1px solid #000; border-radius: 3px; background: linear-gradient(#2c2c2c, #333 60%, #1e1e1e); box-shadow: inset 0 0 0 1px #333; }
.ribbon button.on { border-color: #bbb; background: linear-gradient(135deg, #6e6e6e, #595959); box-shadow: inset 0 0 2px 1px #444; }
.ribbon .big { flex-direction: column; width: 34px; height: 47px; gap: 1px; padding-top: 2px; margin-right: 10px; }
.ribbon .actions { display: flex; gap: 4px; align-items: center; padding-top: 4px; }
.ribbon .actions .big { height: 54px; margin: 0; gap: 2px; padding-top: 3px; }
.gold { color: #c8935a; }
.radios { display: grid; gap: 6px; width: 47px; }
.radios label { display: flex; align-items: center; gap: 4px; }
.radios input { appearance: none; width: 11px; height: 11px; border: 1px solid #777; border-radius: 50%; background: #1c1c1c; }
.radios input:checked { background: radial-gradient(#aaa 2px, #222 3px); }
.cmds { display: grid; grid-template-columns: 75px 75px; gap: 1px 4px; }
.cmds button { height: 23px; justify-content: flex-start; padding-left: 3px; gap: 3px; }
.cmds svg { width: 16px; height: 16px; }
.tag { width: 16px; height: 13px; line-height: 12px; font-size: 8px; font-weight: 700; background: #c8935a; color: #111; text-align: center; }

.toolbar { display: flex; height: 26px; flex: none; padding: 1px 0; border-top: 1px solid #000; background: var(--panel); }
.band { display: flex; align-items: center; padding: 0 2px 0 3px; border-right: 1px solid #000; height: 24px; }
.grip { flex: none; width: 4px; height: 20px; margin-right: 4px; border: 1px solid #000; background: #777; }
.clock { font: 15px/18px "Liberation Mono", monospace; font-feature-settings: normal; white-space: pre; width: 529px; }
.clock span { margin-right: 10px; }
.badge { width: 18px; height: 18px; margin-right: 9px; }
.badge-text { font: bold 13px "Liberation Sans", sans-serif; fill: #222; }
.clock .tri { width: 8px; height: 6px; margin: 0 5px 0 -8px; }
.clock .now { width: 16px; height: 16px; margin-right: 7px; }
.tiny { font: bold 6px "Liberation Sans", sans-serif; fill: #ccc; }
.tiny.dark { fill: #222; font-size: 8px; }
.clock sup { display: inline-block; width: 9px; font-size: 15px; line-height: 8px; vertical-align: 4px; }
.clock .c-lat { margin-right: 17px; }
.clock .key { margin-left: -4px; }
.combo { display: flex; height: 19px; border: 1px solid #888; border-top-color: #000; border-left-color: #000; background: #000; }
.combo select { flex: 1; min-width: 0; padding: 0; border: 0; background: none; appearance: none; outline: 0; font-feature-settings: normal; }
.combo svg { width: 16px; height: 15px; margin: 1px; padding: 5px 4px; border: 1px solid #666; background: #222; }
.target { width: 146px; margin-right: 5px; }
.rate { width: 111px; margin: 0 3px 0 -3px; background: #1c1c1c; }
.band button { width: 16px; margin-right: 6px; }
.play button { margin-right: 8px; }
.play button svg { width: 12px; height: 12px; }
.play button .step { width: 16px; height: 16px; }
.dim { color: #6a6a6a; }

.workspace { display: flex; flex: 1; min-height: 0; background: var(--panel); border-top: 1px solid #000; }
.tools { width: 56px; flex: none; display: flex; flex-direction: column; overflow: hidden; border-right: 1px solid #000; }
.tools button { flex: none; flex-direction: column; justify-content: flex-start; height: 40px; line-height: 18px; }
.tools button span { display: flex; align-items: center; gap: 5px; height: 16px; margin-bottom: 1px; filter: drop-shadow(1px 1px 0 #000); }
.tools svg { width: 16px; height: 16px; }
.tools .drop span::after { content: ""; border: 4px solid transparent; border-top-color: #ccc; border-bottom: 0; }
.tools .file span { color: #c9b560; }
.tools .off { color: #666; }
.tools hr { flex: none; width: 50px; height: 2px; margin: 2px 2px 4px; border: 0; background: #000; border-bottom: 1px solid #444; }
.hgrip { flex: none; height: 4px; margin: 3px 1px; border: 1px solid #000; background: linear-gradient(90deg, #444, #aaa, #444); }
.hgrip.top { margin-bottom: 2px; }

.chart { flex: 1; min-width: 0; display: grid; grid-template: 1fr 17px / 1fr 17px; }
.sky { position: relative; overflow: hidden; background: #52719d; }
.orbits { position: absolute; left: 0; top: 0; width: 920px; height: 693px; fill: none; stroke: #b4b8c2; }
.orbits .venus { fill: #e0f4ff; stroke: #fff; }
.mark { position: absolute; color: #eceff7; font-weight: 700; font-size: 13px; }
.moon { left: 785px; top: 92px; }
.venusname { left: 471px; top: 338px; }
.zoom { position: absolute; left: 10px; top: 148px; width: 40px; display: flex; flex-direction: column; align-items: center; }
.fov { width: 36px; height: 36px; flex-direction: column; align-items: stretch; padding: 1px; border: 1px solid #2b2020; border-radius: 2px; background: #4a5550; color: #c09a78; line-height: 17px; }
.fov b { font: 11px/14px "Liberation Mono", monospace; text-align: right; }
.arrow { width: 36px; height: 36px; border: 1px solid #06222a; border-radius: 2px; background: #296676; margin: 9px 0 14px; }
.arrow svg { width: 14px; height: 12px; }
.zoom input { appearance: none; writing-mode: vertical-lr; width: 40px; height: 249px; background: none; margin-bottom: 10px; }
.zoom input::-webkit-slider-runnable-track { width: 8px; height: 249px; border: 1px solid #000; background: linear-gradient(#04443c 28px, #3c7e78 28px); }
.zoom input::-webkit-slider-thumb { appearance: none; width: 40px; height: 18px; margin-left: -17px; background: url("data:image/svg+xml,%3Csvg xmlns='http://www.w3.org/2000/svg' width='40' height='18'%3E%3Cpath d='M.5.500h6L15 9l-8.500 8.500h-6zM39.500.500h-6L25 9l8.500 8.500h6z' fill='%23307068' stroke='%23001818'/%3E%3Cpath d='M3.500 3v12M5.500 3v12M34.500 3v12M36.500 3v12' stroke='%23001818'/%3E%3C/svg%3E"); }
.fovs { position: absolute; left: 54px; top: 164px; display: flex; gap: 1px; }
.fovs button { width: 38px; height: 20px; border: 1px solid #001c28; border-radius: 3px; background: #296676; color: #00a890; font: 14px/18px "Liberation Sans", sans-serif; text-shadow: 1px 1px 0 #10343e; }
.fovs .hot { border-color: #38a090; }
.cursor { position: absolute; left: 354px; top: 176px; width: 12px; height: 20px; }
.brand { position: absolute; right: 8px; bottom: 1px; font: bold 20px/24px "Liberation Sans", sans-serif; color: #a9bcd6; text-shadow: 1px 2px 2px #30486a; }
.vscroll, .hscroll { display: flex; justify-content: space-between; position: relative; background: #272727; border: 1px solid #333; }
.vscroll { flex-direction: column; }
.vscroll button, .hscroll button { width: 15px; height: 15px; border: 1px solid #555; outline: 1px solid #000; color: #bbb; }
.vscroll svg { width: 8px; height: 4px; }
.vscroll .v { transform: rotate(180deg); }
.hscroll svg { width: 5px; height: 8px; }
.vscroll i, .hscroll i { width: 15px; height: 15px; background: #3c3c3c; border: 1px solid #666; position: absolute; }
.vscroll i { top: 82%; }
.hscroll i { left: 418px; }

.side { width: 205px; flex: none; display: flex; flex-direction: column; border-left: 1px solid #000; }
.side h2 { font-weight: 700; line-height: 24px; padding-left: 8px; border-top: 1px solid #5c6a86; border-bottom: 2px solid #5c6a86; }
.today { margin-top: 1px; padding-left: 8px; font-size: 11px; line-height: 16px; border: solid #000; border-width: 1px 0; background: linear-gradient(90deg, #222, #505050 50%, #1c1c1c); }
.almanac { flex: 1; padding: 10px 8px 0 12px; min-height: 0; }
.cal { width: 172px; height: 127px; background: #545454; border-top: 1px solid #68768c; font: 12px/16px "Noto Sans", "DejaVu Sans", sans-serif; }
.calhead { display: flex; align-items: center; height: 19px; padding: 0 7px 0 4px; border-bottom: 1px solid #222; }
.calhead strong { flex: 1; text-align: center; font: bold 12px/16px "DejaVu Sans", "Noto Sans CJK JP", sans-serif; font-feature-settings: normal; white-space: nowrap; }
.calhead svg { width: 5px; height: 9px; }
.calhead button { margin: 0 2px; }
.cal table { border-collapse: collapse; margin: 4px 0 0 10px; table-layout: fixed; width: 147px; }
.cal td { width: 21px; height: 16px; padding: 0; text-align: right; line-height: 16px; }
.cal td.sel { outline: 1px solid #d00; outline-offset: -1px; }
.cal .out { color: #777; }
.cal td span { display: inline-block; width: 16px; height: 16px; border-radius: 50%; text-align: right; margin-right: -1px; padding-right: 1px; white-space: nowrap; }
.new { background: #111; }
.full { background: #b8a53c; }
.first { background: linear-gradient(90deg, #111 45%, #b8a53c 45%); }
.last { background: linear-gradient(90deg, #b8a53c 50%, #111 50%); }
h3 { line-height: 14px; text-align: center; border: 1px solid #000; background: linear-gradient(90deg, #555, #262626 50%, #555); width: 184px; height: 16px; }
.twilight { display: flex; justify-content: space-between; margin-top: 9px; height: 37px; width: 184px; }
.twilight h3 { width: 123px; }
.twilight p { line-height: 14px; padding-left: 5px; }
.twilight button { width: 46px; height: 23px; margin-top: 7px; border: 2px solid #000; border-radius: 3px; background: linear-gradient(#5a5560, #2e2b33); outline: 1px solid #555; outline-offset: -2px; }
.check { display: flex; align-items: center; gap: 4px; height: 15px; padding-left: 4px; }
.check input { appearance: none; width: 9px; height: 9px; border: 1px solid #888; background: linear-gradient(135deg, transparent 45%, #ccc 45% 60%, transparent 60%); }
.rise { border-collapse: collapse; margin: 5px 0 15px 5px; }
.rise th, .rise td { padding: 0; height: 16px; line-height: 16px; font-weight: 400; text-align: left; }
.rise th { width: 58px; white-space: nowrap; }
.rise td { width: 42px; font-size: 11px; }
.events { padding: 7px 0 0 6px; font-size: 11px; line-height: 12px; }
.events p + p { margin-bottom: 12px; }
.events h4::before { content: "■"; margin-right: 1px; }
.events li { padding-left: 9px; white-space: nowrap; }
.links { flex: none; }
.links a { display: flex; align-items: center; gap: 4px; height: 23px; padding-left: 4px; border-bottom: 2px solid #555; border-top: 1px solid #000; background: linear-gradient(90deg, #344a88, #34487c 50%, #1c2440); font-weight: 700; line-height: 18px; }
.links .current { background: #111; }
.links svg { width: 16px; height: 16px; }

.status { display: flex; align-items: center; height: 19px; flex: none; padding-left: 2px; border-top: 1px solid #000; background: var(--panel); }
.status span { flex: 1; font-size: 11px; }
.status output { width: 241px; height: 17px; line-height: 15px; padding-left: 2px; border: 1px solid #000; border-bottom-color: #777; border-right-color: #777; }
.focus { margin: 0 87px 0 8px; }

.dialog { position: absolute; left: 648px; top: 306px; width: 363px; height: 405px; display: flex; flex-direction: column; border: 1px solid #0078d7; border-top: 0; background: var(--panel); }
.dialog header { display: flex; align-items: center; justify-content: space-between; height: 31px; flex: none; padding: 0 1px 0 7px; background: #0078d7; color: #fff; }
.dialog header button { align-self: flex-end; width: 19px; height: 20px; margin-bottom: 3px; background: #c75050; font: bold 12px/16px "Liberation Sans", sans-serif; }
.dtools { display: flex; align-items: center; height: 25px; flex: none; color: var(--khaki); border-top: 1px solid #000; }
.dtools button { width: 23px; height: 21px; }
.dtools i { width: 1px; height: 17px; background: #000; margin: 0 3px; }
.dtools svg { width: 16px; height: 15px; }
.dtools .set { border: 1px solid #ddd; background: #1a1a1a; }
.dtools .dim { color: #6c6a60; }
.dtools .help { width: 15px; height: 13px; margin-left: 6px; border: 1px solid #bbb; color: #bbb; font: bold 11px/12px "Liberation Sans", sans-serif; }
.dialog pre { flex: 1; margin: 0; padding: 0 1px; border: 1px solid #777; border-left-color: #444; font: 12px/14px "Noto Sans CJK JP", sans-serif; font-feature-settings: "hwid"; overflow: hidden; }
.timeline { width: 100%; height: 46px; margin-top: 2px; overflow: visible; }
.hours { fill: none; stroke: #6f93c8; stroke-dasharray: 5 5; }
.hourtext { fill: #e8e8e8; text-anchor: middle; font: 12px "Noto Sans CJK JP", sans-serif; font-feature-settings: "hwid"; }

.callout { position: absolute; border: 3px solid #fc0; border-radius: 10px; pointer-events: none; }
.c1 { left: 261px; top: 70px; width: 189px; height: 70px; }
.c2 { left: 50px; top: 305px; width: 470px; height: 70px; }
.c3 { left: 720px; top: 325px; width: 80px; height: 55px; }
```
